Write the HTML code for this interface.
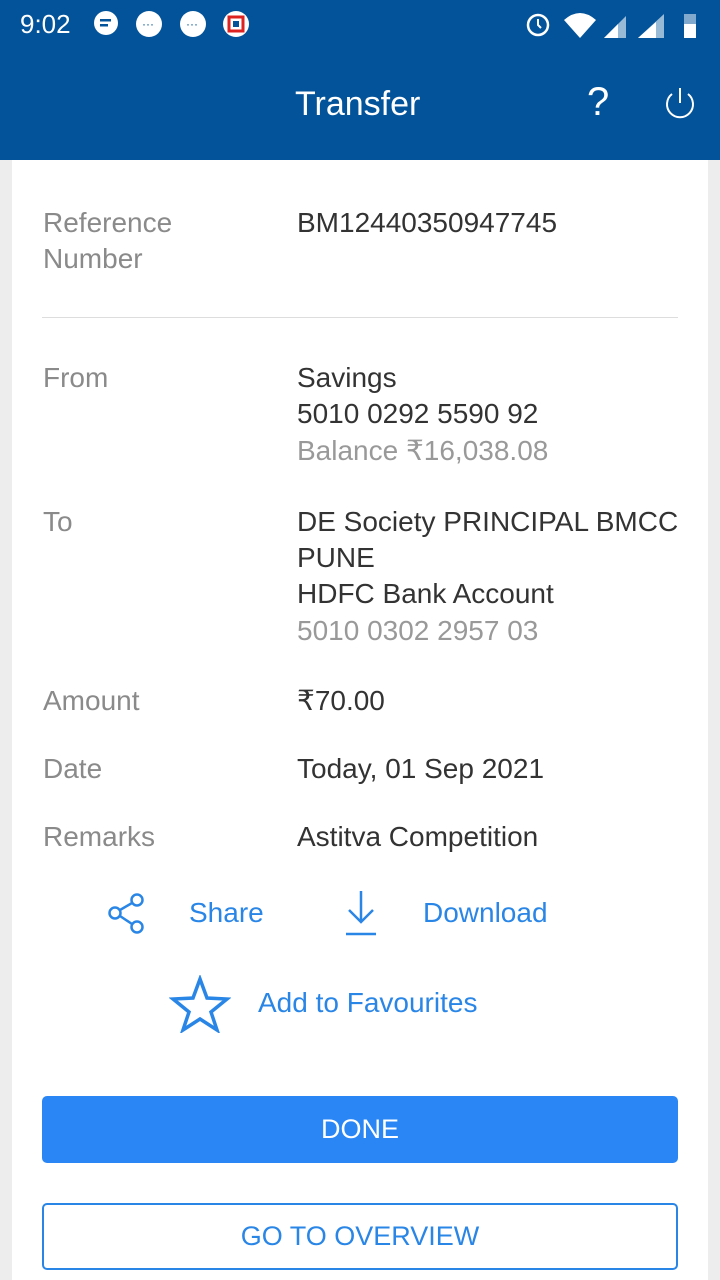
<!DOCTYPE html>
<html><head><meta charset="utf-8"><style>
*{margin:0;padding:0;box-sizing:border-box}
body{width:720px;height:1280px;overflow:hidden;background:#ededed;font-family:"Liberation Sans",sans-serif;position:relative}
.top{position:absolute;left:0;top:0;width:720px;height:160px;background:#02539a;color:#fff}
.card{position:absolute;left:12px;top:160px;width:696px;height:1120px;background:#fff}
.t{position:absolute;font-size:28px;white-space:nowrap;line-height:36px}
.l{color:#8a8a8a;left:43px}
.v{color:#333;left:297px}
.g{color:#999}
.b{color:#2a86e6}
</style></head><body>
<div class="top">
 <div class="t" style="left:20px;top:6px;font-size:26px;color:#fff">9:02</div>
 <svg style="position:absolute;left:92px;top:10px" width="160" height="30">
  <circle cx="14" cy="13" r="12" fill="#fff"/><rect x="8" y="9" width="11" height="2.5" fill="#02539a"/><rect x="8" y="14" width="8" height="2.5" fill="#02539a"/>
  <circle cx="57" cy="14" r="13" fill="#fff"/><text x="50" y="18" font-size="12" fill="#02539a">···</text>
  <circle cx="101" cy="14" r="13" fill="#fff"/><text x="94" y="18" font-size="12" fill="#02539a">···</text>
  <circle cx="144" cy="14" r="13" fill="#fff"/><rect x="137" y="7" width="14" height="14" fill="none" stroke="#d22" stroke-width="3"/><rect x="141" y="11" width="6" height="6" fill="#02539a"/>
 </svg>
 <svg style="position:absolute;left:522px;top:8px" width="185" height="32">
  <circle cx="16" cy="17" r="10" fill="none" stroke="#fff" stroke-width="2.5"/><path d="M16 11v6l3 3" stroke="#fff" stroke-width="2" fill="none"/>
  <path d="M42 12 Q58 -2 74 12 L58 30 Z" fill="#fff"/>
  <path d="M82 30 L104 8 L104 30 Z" fill="#fff" opacity=".6"/><path d="M82 30 L96 16 L96 30 Z" fill="#fff"/>
  <path d="M116 30 L142 6 L142 30 Z" fill="#fff" opacity=".6"/><path d="M116 30 L134 14 L134 30 Z" fill="#fff"/>
  <rect x="162" y="6" width="12" height="24" fill="#fff" opacity=".5"/><rect x="162" y="16" width="12" height="14" fill="#fff"/>
 </svg>
 <div class="t" style="left:295px;top:86px;font-size:34px;color:#fff">Transfer</div>
 <div class="t" style="left:587px;top:84px;font-size:40px;color:#fff;font-weight:300">?</div>
 <svg style="position:absolute;left:662px;top:86px" width="36" height="36"><path d="M10 8 A13 13 0 1 0 26 8" fill="none" stroke="#fff" stroke-width="2"/><line x1="18" y1="2" x2="18" y2="17" stroke="#fff" stroke-width="2"/></svg>
</div>
<div class="card">
 <div style="position:absolute;left:30px;top:157px;width:636px;height:1px;background:#ddd"></div>
</div>
<div class="t l" style="top:205px">Reference</div>
<div class="t l" style="top:241px">Number</div>
<div class="t v" style="top:205px">BM12440350947745</div>
<div class="t l" style="top:360px">From</div>
<div class="t v" style="top:360px">Savings</div>
<div class="t v" style="top:396px">5010 0292 5590 92</div>
<div class="t v g" style="top:433px">Balance ₹16,038.08</div>
<div class="t l" style="top:504px">To</div>
<div class="t v" style="top:504px">DE Society PRINCIPAL BMCC</div>
<div class="t v" style="top:540px">PUNE</div>
<div class="t v" style="top:576px">HDFC Bank Account</div>
<div class="t v g" style="top:613px">5010 0302 2957 03</div>
<div class="t l" style="top:683px">Amount</div>
<div class="t v" style="top:683px">₹70.00</div>
<div class="t l" style="top:751px">Date</div>
<div class="t v" style="top:751px">Today, 01 Sep 2021</div>
<div class="t l" style="top:819px">Remarks</div>
<div class="t v" style="top:819px">Astitva Competition</div>
<svg style="position:absolute;left:106px;top:892px" width="40" height="44" fill="none" stroke="#2a86e6" stroke-width="2.5"><circle cx="31" cy="8" r="5.5"/><circle cx="9" cy="21" r="5.5"/><circle cx="31" cy="35" r="5.5"/><path d="M14 18 L26 11 M14 24 L26 32"/></svg>
<div class="t b" style="left:189px;top:895px">Share</div>
<svg style="position:absolute;left:343px;top:888px" width="36" height="50" stroke="#2a86e6" stroke-width="2.5" fill="none"><path d="M18 3 V34 M6 22 L18 34 L30 22"/><path d="M3 46 H33"/></svg>
<div class="t b" style="left:423px;top:895px">Download</div>
<svg style="position:absolute;left:169px;top:975px" width="62" height="58"><path d="M31 4 L38 23 L58 24 L42 37 L48 55 L31 44 L14 55 L20 37 L4 24 L24 23 Z" fill="none" stroke="#2a86e6" stroke-width="3.5" stroke-linejoin="miter"/></svg>
<div class="t b" style="left:258px;top:985px">Add to Favourites</div>
<div style="position:absolute;left:42px;top:1096px;width:636px;height:67px;background:#2a86f5;border-radius:5px;color:#fff;font-size:27px;text-align:center;line-height:67px">DONE</div>
<div style="position:absolute;left:42px;top:1203px;width:636px;height:67px;border:2px solid #2a86e6;border-radius:5px;color:#2a86e6;font-size:27px;text-align:center;line-height:63px">GO TO OVERVIEW</div>
</body></html>
